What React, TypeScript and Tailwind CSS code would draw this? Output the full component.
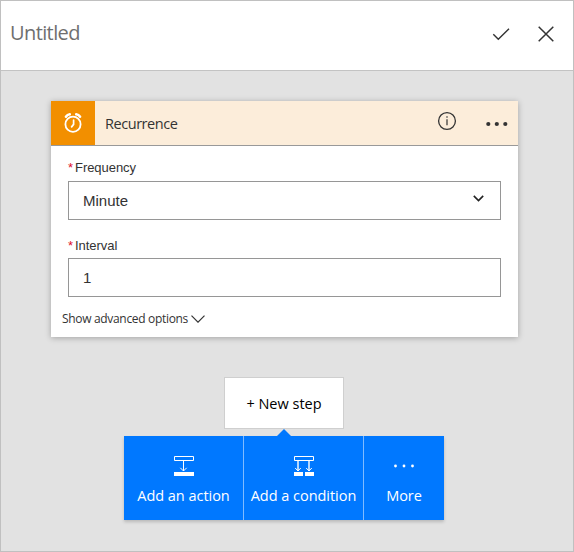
import React from "react";

const ui = "font-['Open_Sans','Noto_Sans',sans-serif]";

function AlarmIcon() {
  return (
    <svg width="20" height="22" viewBox="0 0 20 22" fill="none" stroke="#fff" strokeLinecap="round">
      <circle cx="10" cy="12.2" r="7.6" strokeWidth="1.8" />
      <path d="M10.6 8v4.4l-2 2.5" strokeWidth="1.7" />
      <path d="M2.9 4.8C3.8 3.4 5 2.5 6.8 2.3M17.1 4.8c-.9-1.4-2.1-2.3-3.9-2.5" strokeWidth="2.5" />
    </svg>
  );
}

function InfoIcon() {
  return (
    <svg width="20" height="20" viewBox="0 0 20 20" fill="none" stroke="#333">
      <circle cx="10" cy="10" r="8.4" strokeWidth="1.3" />
      <path d="M10 8.2v6M10 5.3v1.4" strokeWidth="1.2" />
    </svg>
  );
}

function ActionIcon() {
  return (
    <svg width="20" height="20" viewBox="0 0 20 20" fill="none" stroke="#fff">
      <path d="M.5.5h19v4H.5z" />
      <path d="M9.5 5v10" />
      <path d="M6.3 11.8l3.2 3.2 3.2-3.2" />
      <path d="M0 16h20v4H0z" fill="#fff" stroke="none" />
    </svg>
  );
}

function ConditionIcon() {
  return (
    <svg width="20" height="20" viewBox="0 0 20 20" fill="none" stroke="#fff">
      <path d="M.5.5h19v4H.5z" />
      <path d="M4 5v10M15 5v10" strokeOpacity=".7" strokeWidth="2" />
      <path d="M1.2 12l2.8 3 2.8-3M12.2 12l2.8 3 2.8-3" />
      <path d="M0 16h9v4H0zM11 16h9v4h-9z" fill="#fff" stroke="none" />
    </svg>
  );
}

function MoreIcon() {
  return (
    <svg width="20" height="20" viewBox="0 0 20 20" fill="#fff">
      <circle cx="1.5" cy="10" r="1.4" />
      <circle cx="10" cy="10" r="1.4" />
      <circle cx="18.5" cy="10" r="1.4" />
    </svg>
  );
}

function Label({ children }: { children: React.ReactNode }) {
  return (
    <div className="flex h-[18px] items-center text-[13px] leading-[18px] text-[#333]">
      <span className="w-[7px] text-[#e0112b]">*</span>
      <span className="tracking-[-0.05px]">{children}</span>
    </div>
  );
}

function StepButton({ icon, children }: { icon: React.ReactNode; children: React.ReactNode }) {
  return (
    <button className="flex flex-col items-center pt-5 whitespace-nowrap text-white">
      {icon}
      <span className="mt-[10px] text-[14.5px] leading-5 tracking-[-0.03px]">{children}</span>
    </button>
  );
}

export default function App() {
  return (
    <div className={`flex h-[552px] w-[574px] flex-col border border-[#c0c0c0] bg-[#e2e2e2] ${ui}`}>
      <header className="flex h-[70px] shrink-0 items-center border-b border-[#c3c3c3] bg-white pr-[18px] pb-1 pl-[9px]">
        <h1 className="-mt-px text-[20px] leading-7 tracking-[-0.6px] text-[#6f6f6f]">Untitled</h1>
        <svg className="ml-auto" width="18" height="18" viewBox="0 0 18 18" fill="none" stroke="#333" strokeWidth="1.4">
          <path d="M1.3 9.3l5 5L17 3.7" />
        </svg>
        <svg className="ml-[27px]" width="18" height="18" viewBox="0 0 18 18" fill="none" stroke="#333" strokeWidth="1.5">
          <path d="M1.7 1.7l14.6 14.6M16.3 1.7L1.7 16.3" />
        </svg>
      </header>

      <main className="flex flex-col pt-[30px]">
        <section className="ml-[50px] h-[236px] w-[467px] bg-white shadow-[0_1px_6px_rgba(0,0,0,0.28)]">
          <div className="flex h-[45px] items-center border-b border-[#999] bg-[#fcedda]">
            <div className="flex h-11 w-11 items-center justify-center bg-[#f28f00]">
              <AlarmIcon />
            </div>
            <span className="mt-[2px] ml-[10px] text-[14.5px] leading-5 font-normal tracking-[-0.45px] text-[#333]">Recurrence</span>
            <div className="-mt-[4px] ml-auto">
              <InfoIcon />
            </div>
            <svg className="mt-px mr-[10px] ml-[29px]" width="22" height="6" viewBox="0 0 22 6" fill="#333">
              <circle cx="2.3" cy="3" r="2.1" />
              <circle cx="10.8" cy="3" r="2.1" />
              <circle cx="19.3" cy="3" r="2.1" />
            </svg>
          </div>

          <div className="px-[17px] pt-[13px] font-['Liberation_Sans',Arial,sans-serif]">
            <Label>Frequency</Label>
            <div className="mt-[4px] flex h-[39px] items-center justify-between border border-[#969696] pr-4 pl-[14px] text-[15px] text-[#333]">
              <span className="pt-[2px]">Minute</span>
              <svg className="-mt-[5px]" width="11" height="7" viewBox="0 0 11 7" fill="none" stroke="#222" strokeWidth="1.6">
                <path d="M.8.9l4.7 4.7L10.2.9" />
              </svg>
            </div>
            <div className="mt-[17px]">
              <Label>Interval</Label>
            </div>
            <div className="mt-[3px] flex h-[39px] items-center border border-[#969696] pt-[2px] pl-[14px] text-[15px] text-[#333]">1</div>
          </div>

          <div className="mt-[13px] ml-[11px] flex h-[18px] items-center text-[12px] leading-[18px] text-[#333]">
            <span className="tracking-[-0.32px]">Show advanced options</span>
            <svg className="ml-[3px]" width="14" height="8" viewBox="0 0 14 8" fill="none" stroke="#333" strokeWidth="1.2">
              <path d="M.5.7L7 7.2 13.5.7" />
            </svg>
          </div>
        </section>

        <button className="mt-10 ml-[223px] h-[52px] w-[120px] border border-[#cfcfcf] bg-white pt-px text-[14.5px] leading-5 whitespace-nowrap text-black">
          + New step
        </button>

        <svg className="ml-[276px]" width="14" height="7" viewBox="0 0 14 7" fill="#0078ff">
          <path d="M0 7l7-7 7 7z" />
        </svg>
        <div className="ml-[123px] grid h-[84px] w-80 grid-cols-[120px_120px_80px] bg-[#0078ff] shadow-[0_2px_3px_rgba(0,0,0,0.18)] [&>*:not(:last-child)]:border-r [&>*:not(:last-child)]:border-[#80bbff]">
          <StepButton icon={<ActionIcon />}>Add an action</StepButton>
          <StepButton icon={<ConditionIcon />}>Add a condition</StepButton>
          <StepButton icon={<MoreIcon />}>More</StepButton>
        </div>
      </main>
    </div>
  );
}
